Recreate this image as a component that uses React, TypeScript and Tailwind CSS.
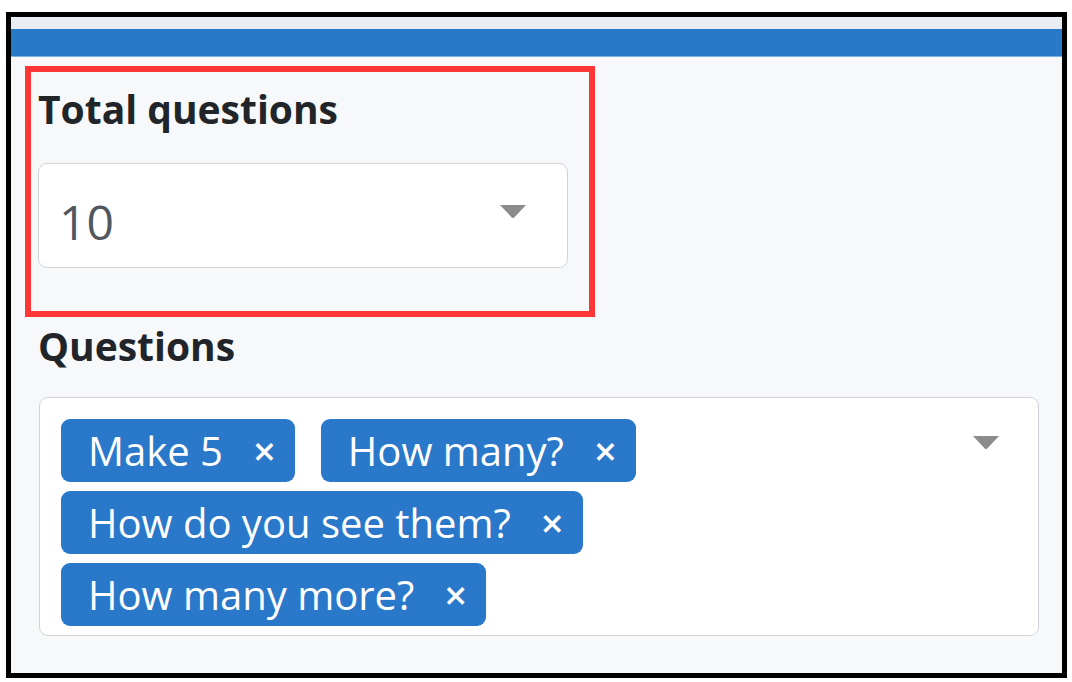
import React from 'react';

const questions = ['Make 5', 'How many?', 'How do you see them?', 'How many more?'];

const Caret: React.FC = () => (
  <svg width="26" height="13" viewBox="0 0 26 13" className="shrink-0">
    <path d="M0 0 H26 L14.2 12.4 Q13 13.4 11.8 12.4 Z" fill="#8c8c8c" />
  </svg>
);

const Chip: React.FC<{ label: string }> = ({ label }) => (
  <span className="flex h-[63px] items-center rounded-[9px] bg-[#2a78c9] pl-[27px] pr-[19px] text-[40px] leading-none text-white">
    <span>{label}</span>
    <span className="ml-[30px] font-semibold">×</span>
  </span>
);

export default function App() {
  return (
    <div className="h-[682px] w-[1072px] bg-white pl-[6px] pt-[12px] font-['Open_Sans',sans-serif]">
      <div className="flex h-[666px] w-[1061px] flex-col border-[5px] border-black bg-[#f6f8fa]">
        <div className="h-[12px] bg-[#e8edf4]" />
        <div className="h-[28px] border-b border-[#7fb0e2] bg-[#2979c9]" />

        <div className="flex flex-col pl-[27px] pt-[9px]">
          {/* highlighted field */}
          <div className="-ml-[13px] h-[251px] w-[570px] border-[6px] border-[#ff3636] pl-[7px] pt-[13px]">
            <div className="text-[39px] font-bold leading-[48px] text-[#212529]">Total questions</div>
            <div className="mt-[30px] flex h-[105px] w-[530px] items-center justify-between rounded-[9px] border-[1.5px] border-[#d1d5da] bg-white pl-[20px] pr-[41px]">
              <span className="pt-[12px] text-[48px] leading-none text-[#51575e]">10</span>
              <span className="mb-[8px]">
                <Caret />
              </span>
            </div>
          </div>

          <div className="mt-[5px] text-[39px] font-bold leading-[48px] text-[#212529]">Questions</div>

          <div className="ml-[1px] mt-[27px] flex h-[239px] w-[1000px] items-start rounded-[9px] border-[1.5px] border-[#d1d5da] bg-white pl-[21px] pr-[39px] pt-[21px]">
            <div className="flex flex-1 flex-wrap gap-x-[26px] gap-y-[9px]">
              {questions.map((q) => (
                <Chip key={q} label={q} />
              ))}
            </div>
            <span className="mt-[17px] shrink-0">
              <Caret />
            </span>
          </div>
        </div>
      </div>
    </div>
  );
}
